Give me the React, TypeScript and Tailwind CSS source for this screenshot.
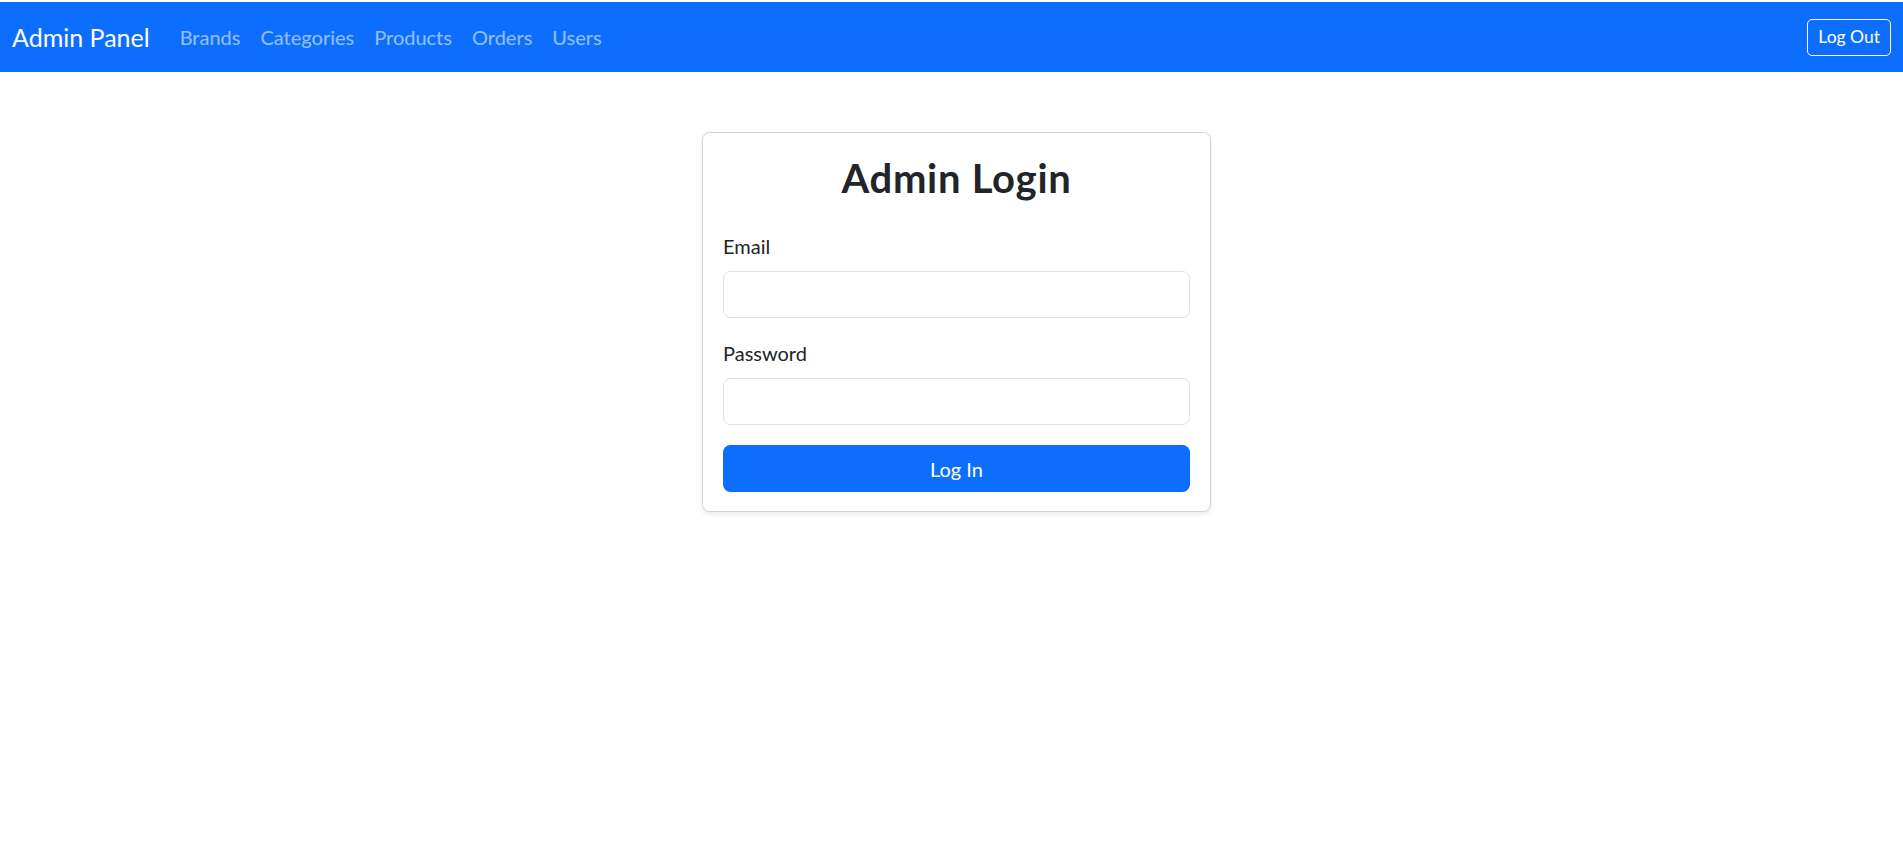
import React from 'react';

const navLinks = ['Brands', 'Categories', 'Products', 'Orders', 'Users'];

export default function App() {
  return (
    <div className="min-h-screen bg-white pt-[2px] font-['Lato',sans-serif] text-[#212529]">
      <nav className="flex h-[70px] items-center justify-between bg-[#0d6efd] px-[12px]">
        <div className="flex items-center">
          <a className="mr-[20px] text-[25px] leading-[37px] text-white">Admin Panel</a>
          <ul className="flex">
            {navLinks.map(l => (
              <li key={l}>
                <a className="px-[10px] text-[20px] leading-[30px] text-white/55">{l}</a>
              </li>
            ))}
          </ul>
        </div>
        <button className="h-[37px] rounded-[5px] border border-white px-[10px] text-[17.5px] leading-none text-white">
          Log Out
        </button>
      </nav>

      <div className="flex justify-center pl-[10px] pt-[60px]">
        <div className="w-[509px] rounded-[7.5px] border border-[#d3d3d3] bg-white px-[20px] pb-[19px] pt-[21px] shadow-[0_2.5px_5px_rgba(0,0,0,0.075)]">
          <h2 className="mb-[29px] text-center text-[40px] font-bold leading-[48px] tracking-[0.7px]">Admin Login</h2>
          <label className="mb-[10px] block text-[20px] leading-[30px]">Email</label>
          <input type="email" className="mb-[20px] block h-[47px] w-full rounded-[7.5px] border border-[#dee2e6] px-[15px] text-[20px] outline-none" />
          <label className="mb-[10px] block text-[20px] leading-[30px]">Password</label>
          <input type="password" className="mb-[20px] block h-[47px] w-full rounded-[7.5px] border border-[#dee2e6] px-[15px] text-[20px] outline-none" />
          <button className="h-[47px] w-full rounded-[7.5px] bg-[#0d6efd] text-[20px] text-white">Log In</button>
        </div>
      </div>
    </div>
  );
}
